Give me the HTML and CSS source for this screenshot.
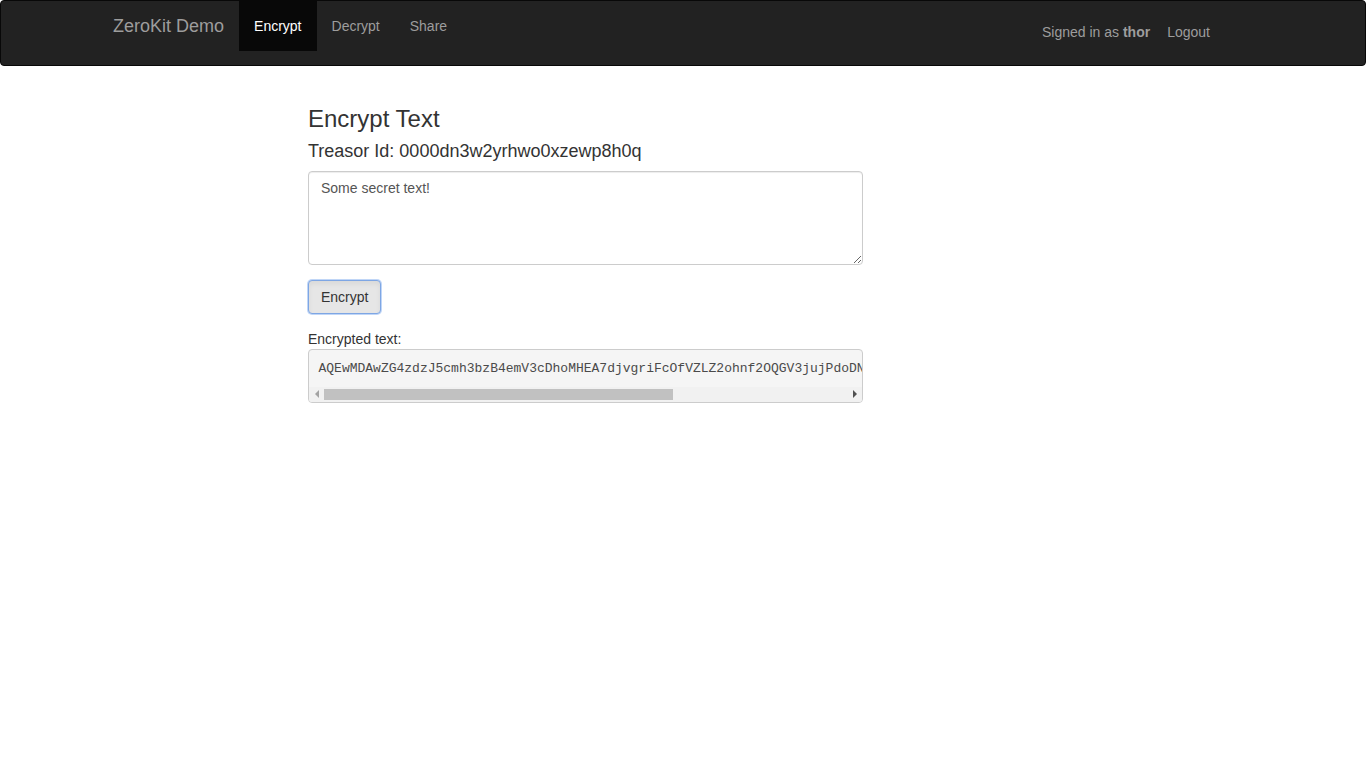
FILE: index.html
```html
<!DOCTYPE html>
<html lang="en">
<head>
<meta charset="utf-8">
<title>ZeroKit Demo</title>
<link rel="stylesheet" href="styles.css">
</head>
<body>
<nav class="navbar">
  <div class="nav-inner">
    <div class="nav-left">
      <a class="brand" href="#">ZeroKit Demo</a>
      <ul class="nav-links">
        <li class="active"><a href="#">Encrypt</a></li>
        <li><a href="#">Decrypt</a></li>
        <li><a href="#">Share</a></li>
      </ul>
    </div>
    <div class="nav-right">
      <span class="nav-text">Signed in as <b>thor</b></span>
      <a class="nav-logout" href="#">Logout</a>
    </div>
  </div>
</nav>
<main class="main">
  <h3 class="title">Encrypt Text</h3>
  <h4 class="subtitle">Treasor Id: 0000dn3w2yrhwo0xzewp8h0q</h4>
  <div class="form-group">
    <textarea class="form-control" rows="4">Some secret text!</textarea>
  </div>
  <button class="btn" type="button">Encrypt</button>
  <label class="out-label">Encrypted text:</label>
  <div class="output-box">
    <pre class="output">AQEwMDAwZG4zdzJ5cmh3bzB4emV3cDhoMHEA7djvgriFcOfVZLZ2ohnf2OQGV3jujPdoDNq8xK2vTb1sLmW9aR4ePzYgHc3uFiJ0nQwE5tVyXo7kB==</pre>
    <div class="hscroll" aria-hidden="true">
      <span class="sb-btn"><span class="arrow-left"></span></span>
      <span class="sb-track"><span class="sb-thumb"></span></span>
      <span class="sb-btn"><span class="arrow-right"></span></span>
    </div>
  </div>
</main>
</body>
</html>
```

FILE: styles.css
```css
* { box-sizing: border-box; }
html, body { margin: 0; padding: 0; }
body {
  font-family: "Liberation Sans", Arial, Helvetica, sans-serif;
  font-size: 14px;
  line-height: 1.42857;
  color: #333;
  background: #fff;
}
a { text-decoration: none; }

.navbar {
  background: #222;
  border: 1px solid #080808;
  border-radius: 4px;
  height: 66px;
}
.nav-inner {
  display: flex;
  justify-content: space-between;
  padding-left: 97px;
  padding-right: 155px;
}
.nav-left { display: flex; align-items: flex-start; }
.brand {
  display: block;
  padding: 15px 15px;
  height: 50px;
  font-size: 18px;
  line-height: 20px;
  color: #9d9d9d;
}
.nav-links {
  display: flex;
  list-style: none;
  margin: 0;
  padding: 0;
}
.nav-links a {
  display: block;
  padding: 15px 15px;
  line-height: 20px;
  color: #9d9d9d;
}
.nav-links .active a {
  background: #080808;
  color: #fff;
}
.nav-right {
  display: flex;
  align-items: flex-start;
  padding-top: 21px;
  color: #9d9d9d;
  line-height: 20px;
}
.nav-text { margin-right: 17px; }
.nav-text b { font-weight: bold; }
.nav-logout { color: #9d9d9d; }

.main {
  width: 555px;
  margin-left: 308px;
  padding-top: 20px;
}
.title {
  font-size: 24px;
  font-weight: 500;
  line-height: 1.1;
  margin: 20px 0 10px;
}
.subtitle {
  font-size: 18px;
  font-weight: 500;
  line-height: 1.1;
  margin: 10px 0 9px;
}
.form-group { margin-bottom: 15px; }
.form-control {
  display: block;
  width: 100%;
  height: 94px;
  padding: 7px 12px 5px;
  font-family: inherit;
  font-size: 14px;
  line-height: 1.42857;
  color: #555;
  background: #fff;
  border: 1px solid #ccc;
  border-radius: 4px;
  box-shadow: inset 0 1px 1px rgba(0,0,0,.075);
  resize: vertical;
  margin: 0;
}
.btn {
  display: block;
  height: 34px;
  padding: 7px 12px 5px;
  font-family: inherit;
  font-size: 14px;
  line-height: 1.42857;
  color: #333;
  background: #e6e6e6;
  border: 1px solid #7ea6e4;
  box-shadow: 0 0 0 1px rgba(140,180,240,.55), inset 0 3px 5px rgba(0,0,0,.06);
  border-radius: 4px;
  margin: 0;
  cursor: pointer;
}
.out-label {
  display: block;
  margin-top: 15px;
  margin-bottom: 0;
  line-height: 20px;
}
.output-box {
  background: #f5f5f5;
  border: 1px solid #ccc;
  border-radius: 4px;
  overflow: hidden;
}
.output {
  margin: 0;
  padding: 9.5px 9.5px 8.5px;
  font-family: "Liberation Mono", "Courier New", monospace;
  font-size: 13px;
  line-height: 1.42857;
  color: #4a4a4a;
  overflow: hidden;
  white-space: pre;
}
.hscroll {
  display: flex;
  height: 15px;
  background: #f1f1f1;
}
.sb-btn {
  flex: 0 0 15px;
  display: flex;
  align-items: center;
  justify-content: center;
}
.arrow-left {
  width: 0;
  height: 0;
  border-top: 4px solid transparent;
  border-bottom: 4px solid transparent;
  border-right: 4px solid #a3a3a3;
}
.arrow-right {
  width: 0;
  height: 0;
  border-top: 4px solid transparent;
  border-bottom: 4px solid transparent;
  border-left: 4px solid #505050;
}
.sb-track {
  flex: 1;
  display: flex;
  align-items: center;
}
.sb-thumb {
  width: 66.7%;
  height: 11px;
  background: #c1c1c1;
}
```
